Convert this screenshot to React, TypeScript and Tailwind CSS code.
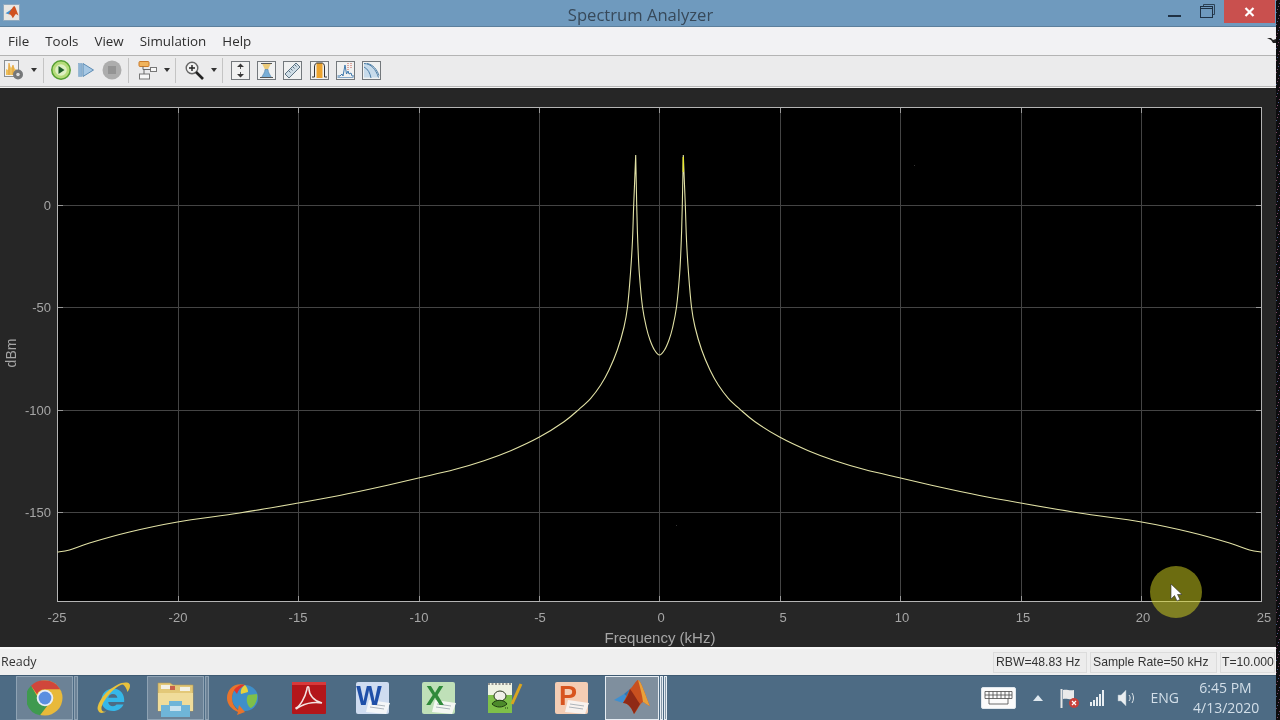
import type { ReactNode } from 'react';

// ---------------------------------------------------------------------------
// Chart data (page pixels, traced from 0 kHz outwards and back for the inner slope)
// ---------------------------------------------------------------------------

const CENTER_X = 659.5;
const HALF_TRACE: [number, number][] = [
  [0, 355], [5, 350], [9.5, 340], [13, 328], [17, 307], [20.2, 273], [21.8, 240], [22.8, 205], [23.8, 155],
  [25.8, 205], [27, 240], [29, 273], [32, 307], [35.5, 327], [42.2, 350], [50.5, 370], [58.8, 385],
  [68.8, 398.3], [80.5, 409.3], [95.5, 421.7], [120.5, 437.3], [148.8, 450.7], [175.5, 460.7], [205, 469.5],
  [241, 478], [280, 487], [320, 495.5], [361, 503], [420, 513], [482, 522], [530, 532], [570, 543], [590, 550], [602, 552],
];

function tracePath(): string {
  const left = [...HALF_TRACE].reverse().map(([dx, y]) => [CENTER_X - dx, y]);
  const right = HALF_TRACE.slice(1).map(([dx, y]) => [CENTER_X + dx, y]);
  const pts = [...left, ...right];
  let d = `M${pts[0][0]} ${pts[0][1]}`;
  for (let i = 0; i < pts.length - 1; i++) {
    const p0 = pts[Math.max(0, i - 1)];
    const p1 = pts[i];
    const p2 = pts[i + 1];
    const p3 = pts[Math.min(pts.length - 1, i + 2)];
    // keep the peaks sharp
    const k = p1[1] < 160 || p2[1] < 160 ? 0 : 1 / 6;
    d += `C${p1[0] + (p2[0] - p0[0]) * k} ${p1[1] + (p2[1] - p0[1]) * k} ${p2[0] - (p3[0] - p1[0]) * k} ${p2[1] - (p3[1] - p1[1]) * k} ${p2[0]} ${p2[1]}`;
  }
  return d;
}

const X_TICKS = [
  { x: 57.5, lx: 57, t: '-25' }, { x: 178.5, lx: 178, t: '-20' }, { x: 298.5, lx: 298, t: '-15' },
  { x: 419.5, lx: 419, t: '-10' }, { x: 539.5, lx: 540, t: '-5' }, { x: 659.5, lx: 661, t: '0' },
  { x: 780.5, lx: 783, t: '5' }, { x: 900.5, lx: 902, t: '10' }, { x: 1021.5, lx: 1023, t: '15' },
  { x: 1141.5, lx: 1143, t: '20' }, { x: 1261.5, lx: 1264, t: '25' },
];
const Y_TICKS = [
  { y: 205.5, t: '0' }, { y: 307.5, t: '-50' }, { y: 410.5, t: '-100' }, { y: 512.5, t: '-150' },
];

function Chart() {
  return (
    <svg viewBox="0 88 1276 559" className="block h-full w-full" style={{ fontFamily: '"Liberation Sans", sans-serif' }}>
      <rect x="57.5" y="107.5" width="1204" height="494" fill="#000" />
      {X_TICKS.slice(1, -1).map((k) => (
        <g key={k.t}>
          <line x1={k.x} x2={k.x} y1="107.5" y2="601.5" stroke="#444" />
          <line x1={k.x} x2={k.x} y1="107.5" y2="113" stroke="#999" />
          <line x1={k.x} x2={k.x} y1="596" y2="601.5" stroke="#999" />
        </g>
      ))}
      {Y_TICKS.map((k) => (
        <g key={k.t}>
          <line x1="57.5" x2="1261.5" y1={k.y} y2={k.y} stroke="#444" />
          <line x1="57.5" x2="63" y1={k.y} y2={k.y} stroke="#999" />
          <line x1="1256" x2="1261.5" y1={k.y} y2={k.y} stroke="#999" />
        </g>
      ))}
      <rect x="57.5" y="107.5" width="1204" height="494" fill="none" stroke="#b4b4b4" />
      <path d={tracePath()} fill="none" stroke="#e2e2a6" strokeWidth="1.1" />
      <line x1="683.3" x2="683.3" y1="157" y2="172" stroke="#e8e830" strokeWidth="1.4" />
      <rect x="914" y="165" width="1" height="1" fill="#333" />
      <rect x="676" y="525" width="1" height="1" fill="#333" />
      {X_TICKS.map((k) => (
        <text key={k.t} x={k.lx} y="622" textAnchor="middle" fontSize="13" fill="#a6a6a6">{k.t}</text>
      ))}
      {Y_TICKS.map((k) => (
        <text key={k.t} x="51" y={k.y + 4} textAnchor="end" fontSize="13" fill="#a6a6a6">{k.t}</text>
      ))}
      <text x="660" y="643" textAnchor="middle" fontSize="15" fill="#a6a6a6">Frequency (kHz)</text>
      <text transform="translate(16 353) rotate(-90)" textAnchor="middle" fontSize="14" fill="#a6a6a6">dBm</text>
    </svg>
  );
}

// ---------------------------------------------------------------------------
// Toolbar icons
// ---------------------------------------------------------------------------

function Caret() {
  return <svg width="6" height="4" viewBox="0 0 6 4"><path d="M0 0h6L3 4z" fill="#333" /></svg>;
}

function Sep() {
  return <div className="h-[25px] w-px bg-[#c4c4c4]" />;
}

function Tool({ children }: { children: ReactNode }) {
  return (
    <svg width="19" height="19" viewBox="0 0 19 19" className="shrink-0">
      <rect x="0.5" y="0.5" width="18" height="18" fill="#f0f1f1" stroke="#73787c" />
      {children}
    </svg>
  );
}

function Toolbar() {
  return (
    <div className="flex h-[31px] items-center border-b border-[#b9b9b9] bg-[#ebebec] pb-[2px] pl-[4px]">
      <svg width="20" height="20" viewBox="0 0 20 20">
        <rect x="0.5" y="0.5" width="14" height="16" fill="#f2f2f2" stroke="#8a8f93" />
        <path d="M2 15V9l2 1 1-7 2 5 2-3 2 4 2 1v5z" fill="#ecc05e" />
        <path d="M5 3v12M9 5v10" stroke="#e39c35" />
        <circle cx="14" cy="14.500" r="5" fill="#77797b" />
        <circle cx="14" cy="14.500" r="2.200" fill="#ddd" stroke="#555" strokeWidth="0.6" />
      </svg>
      <div className="ml-[7px]"><Caret /></div>
      <div className="ml-[6px]"><Sep /></div>
      <svg width="20" height="20" viewBox="0 0 20 20" className="ml-[7px]">
        <circle cx="10" cy="10" r="9.200" fill="#b6dc7a" stroke="#559f32" strokeWidth="1.500" />
        <circle cx="10" cy="10" r="5.800" fill="#dff0c4" />
        <path d="M7.500 6l6 4-6 4z" fill="#1f5f2a" />
      </svg>
      <svg width="16" height="16" viewBox="0 0 16 16" className="ml-[7px]">
        <rect x="0.500" y="1.500" width="3.500" height="13" fill="#8fb4d4" stroke="#7aa3c6" strokeWidth="0.5" />
        <path d="M5 1.500L15.500 8 5 14.500z" fill="#a7c8e4" stroke="#5d8cb4" />
      </svg>
      <svg width="20" height="20" viewBox="0 0 20 20" className="ml-[8px]">
        <circle cx="10" cy="10" r="9.500" fill="#adadad" />
        <rect x="6" y="6" width="8" height="8" fill="#949494" />
      </svg>
      <div className="ml-[6px]"><Sep /></div>
      <svg width="19" height="20" viewBox="0 0 19 20" className="ml-[9px]">
        <rect x="1" y="1.500" width="10" height="5" rx="1" fill="#f0b35c" stroke="#c97a2a" />
        <rect x="1.500" y="14" width="10" height="5" fill="#f7f7f7" stroke="#777" />
        <rect x="12.500" y="7.500" width="6" height="4" fill="#f7f7f7" stroke="#777" />
        <path d="M5 6.500v3h7.500M6 14v-4" fill="none" stroke="#666" />
      </svg>
      <div className="ml-[7px]"><Caret /></div>
      <div className="ml-[5px]"><Sep /></div>
      <svg width="19" height="19" viewBox="0 0 19 19" className="ml-[9px]">
        <circle cx="7" cy="7" r="5.800" fill="#f2f2f2" stroke="#666" strokeWidth="1.400" />
        <path d="M4 7h6M7 4v6" stroke="#222" strokeWidth="1.400" />
        <path d="M11 11l7 7" stroke="#222" strokeWidth="2.600" />
      </svg>
      <div className="ml-[7px]"><Caret /></div>
      <div className="ml-[5px]"><Sep /></div>
      <div className="ml-[8px] flex gap-[7.2px]">
        <Tool>
          <path d="M9.500 2.500l3.500 3.500H6zM9.500 16.500L13 13H6z" fill="#383838" />
          <path d="M9.500 6v2M9.500 11v2" stroke="#555" />
        </Tool>
        <Tool>
          <path d="M5 2.500h9l-3 6H8z" fill="#eccb7a" />
          <path d="M8 8.500h3c0 3 2 5 3.500 8h-10c1.500-3 3.500-5 3.500-8z" fill="#79aed6" stroke="#4d7fa8" strokeWidth="0.600" />
          <path d="M4 2.500h11M3 16.500h13" stroke="#555" />
        </Tool>
        <Tool>
          <path d="M2 13L13 2l4 4L6 17z" fill="#cfdde6" stroke="#5b7282" />
          <path d="M6 10l1.500 1.500M8 8l1.500 1.500M10 6l1.500 1.500M12 4l1.500 1.500" stroke="#5b7282" />
        </Tool>
        <Tool>
          <rect x="6.500" y="2" width="6" height="15" fill="#eda42e" />
          <path d="M2 16h2.500V6c0-3 1.500-4 2.500-4h5c1 0 2.500 1 2.500 4v10H17" fill="none" stroke="#333" />
        </Tool>
        <Tool>
          <path d="M1.500 15h2.500l2-2 1 2 2-11 1.500 9 1.500-3 1 3 2-1 1 3h2" fill="none" stroke="#3f79ad" />
          <path d="M1.500 16.500h16" stroke="#3f79ad" strokeWidth="0.6" />
          <path d="M12 2v7M15 2v5" stroke="#c85a4a" strokeDasharray="1 1" />
        </Tool>
        <Tool>
          <path d="M2 2.500c7 0 12 6 14.500 14H2z" fill="#b5d2e8" opacity="0.7" />
          <path d="M2 2.500c7 0 12 6 14.500 14M5 2.500c6 1 10 6 12 12M9 17c-1-5-3-9-7-11" fill="none" stroke="#4d7fa8" />
        </Tool>
      </div>
    </div>
  );
}

// ---------------------------------------------------------------------------
// Taskbar icons
// ---------------------------------------------------------------------------

function ChromeIcon() {
  return (
    <svg width="36" height="36" viewBox="0 0 36 36">
      <circle cx="18" cy="18" r="17.500" fill="#e8b93a" />
      <path d="M18 .5a17.500 17.500 0 0 1 15.200 8.750H18a8.750 8.750 0 0 0-8 5L4 5.800A17.500 17.500 0 0 1 18 .5z" fill="#d0463b" />
      <path d="M4 5.800l7.800 13.200a8 8 0 0 0 8.500 6.700L13 35.300A17.500 17.500 0 0 1 4 5.800z" fill="#3f9a4f" />
      <circle cx="18" cy="18" r="8.300" fill="#e9eef5" />
      <circle cx="18" cy="18" r="6.400" fill="#5b8fe0" />
    </svg>
  );
}

function IeIcon() {
  return (
    <svg width="36" height="36" viewBox="0 0 36 36">
      <path d="M18 8.500a11.500 11.500 0 0 0-11.500 12c0 6.500 5 10.500 11.500 10.500 5 0 8.500-2.500 10.500-6.500h-7c-1 1.200-2 1.700-3.500 1.700-2.800 0-4.500-1.700-4.800-4.200h16c.7-8-4-13.500-11.200-13.500zm-4.700 9.300c.4-2.400 2.100-3.900 4.600-3.900s4.200 1.500 4.500 3.900z" fill="#35b7e8" />
      <path d="M3 30C1 26 8 12 22 5c6-3 11-3 12.500-1 1.300 2 0 5-2 8-1-3.500-2.500-6-4.500-7.500C20 5.500 6 22 6.500 29c0 2 2 3 4.500 2.500C7 34 4 33 3 30z" fill="#e8c23c" />
    </svg>
  );
}

function FolderIcon() {
  return (
    <svg width="37" height="37" viewBox="0 0 37 37">
      <path d="M1 3h12l3 2h20v26H1z" fill="#e3c878" stroke="#b99c50" strokeWidth="0.600" />
      <rect x="4" y="5" width="9" height="4" fill="#f4f1e4" />
      <rect x="23" y="7" width="10" height="4" fill="#f4f1e4" />
      <rect x="13" y="6" width="5" height="4" fill="#c9614a" />
      <path d="M1 13h35v18H1z" fill="#f0dc9a" />
      <path d="M4 37V25h8v-4h13v4h8v12z" fill="#6fb5d8" />
      <rect x="13" y="26" width="11" height="5" fill="#c9e2ee" />
    </svg>
  );
}

function SyncIcon() {
  return (
    <svg width="34" height="34" viewBox="0 0 34 34">
      <circle cx="19" cy="17" r="13" fill="#3f8fc9" />
      <path d="M19 4c-8 0-13 6-13 13 0 5 2 9 6 12l1-5 6 7-8 3 1-3C5 28 1 23 1 17 1 8 9 1 19 4z" fill="#e8742c" />
      <path d="M8 9c3-4 7-6 11-5-4 2-7 5-8 9z" fill="#e2342c" />
      <path d="M19 4c2 2 3 4 3 7l-7 2c-1-4 1-7 4-9z" fill="#e8d23c" />
      <path d="M22 14l9-1c1 6-2 12-6 14-3-1-6-8-3-13z" fill="#7fc04a" />
    </svg>
  );
}

function AcrobatIcon() {
  return (
    <svg width="36" height="34" viewBox="0 0 36 34">
      <rect x="1" y="1" width="34" height="32" rx="1" fill="#b3161a" />
      <rect x="1" y="1" width="34" height="3" fill="#d8393a" />
      <path d="M5 27c4-2 9-10 11-19 0-3 2-3 2 0 0 6 5 12 13 14-7-1-15 0-21 3-3 1-5 4-5 2z" fill="none" stroke="#f4e4e2" strokeWidth="1.500" />
    </svg>
  );
}

function OfficeIcon({ letter, tile, mark, sheet }: { letter: string; tile: string; mark: string; sheet: string }) {
  return (
    <svg width="36" height="34" viewBox="0 0 36 34" style={{ fontFamily: '"Liberation Sans", sans-serif' }}>
      <rect x="1" y="1" width="33" height="32" rx="2" fill={tile} />
      <path d="M14 19l21 3-4 11-20-2z" fill={sheet} />
      <path d="M16 23l14 2M15 26l14 2" stroke="#9aa4ad" strokeWidth="0.800" />
      <text x="14" y="24" textAnchor="middle" fontSize="27" fontWeight="700" fill={mark}>{letter}</text>
    </svg>
  );
}

function NotepadIcon() {
  return (
    <svg width="36" height="34" viewBox="0 0 36 34">
      <path d="M1 2h24v30H1z" fill="#eef2e2" />
      <path d="M1 14h24v18H1z" fill="#7fc04a" />
      <path d="M1 3h24" stroke="#777" strokeWidth="1.500" strokeDasharray="2 1.500" />
      <ellipse cx="13" cy="15" rx="6" ry="5" fill="#f0f0e8" stroke="#2c3a20" />
      <path d="M5 23c3-5 12-5 15 0-4 4-11 4-15 0z" fill="#4c8a2a" stroke="#1f3a12" />
      <path d="M25 23L34 3" stroke="#d9a520" strokeWidth="3" />
      <path d="M18 27h4" stroke="#1f3a12" strokeDasharray="1 1" />
    </svg>
  );
}

function MatlabIcon() {
  return (
    <svg width="38" height="36" viewBox="0 0 38 36">
      <path d="M1 20l10-6 5 4-6 5z" fill="#3f8fd0" />
      <path d="M11 14l6-5 2 4-3 5z" fill="#2f78b8" />
      <path d="M17 9C20 7 23 0 25 0c3 0 8 17 12 26-3-1-6-4-7-4-3 1-6 9-9 12-2-5-5-11-11-11z" fill="#c9501f" />
      <path d="M25 0c3 0 8 17 12 26-3-1-6-4-7-4-1-8-3-15-5-22z" fill="#e8a03a" />
      <path d="M10 23c6 0 9 6 11 11 2-3 4-7 6-10-3-4-6-10-10-15-1 4-3 9-7 14z" fill="#8f2a16" />
    </svg>
  );
}

function TaskButton({ active, strips = 1, children }: { active?: boolean; strips?: number; children: ReactNode }) {
  return (
    <div className="flex h-[44px] shrink-0 items-stretch gap-px">
      <div className={`flex items-center justify-center border ${active ? 'w-[54px] border-[#e6edf3] bg-[#7f8f9e]' : 'w-[57px] border-[#8fa3b4] bg-[#6c8296]'}`}>
        {children}
      </div>
      {Array.from({ length: strips }).map((_, i) => (
        <div key={i} className={`border ${active ? 'w-[3px] border-[#e6edf3] bg-[#8698a8]' : 'w-[4px] border-[#8fa3b4] bg-[#6c8296]'}`} />
      ))}
    </div>
  );
}

function Slot({ width, children }: { width: string; children: ReactNode }) {
  return <div className={`flex h-[44px] shrink-0 items-center justify-center ${width}`}>{children}</div>;
}

function Tray() {
  return (
    <div className="ml-auto flex h-full items-center text-[#d3dfe9]">
      <svg width="35" height="22" viewBox="0 0 35 22">
        <rect x="0.500" y="0.500" width="34" height="21" rx="1.500" fill="#fbfbfb" stroke="#dfe6ec" />
        <path d="M4 4.500h27v7H4zM4 8h27M8 4.500v7M12 4.500v7M16 4.500v7M20 4.500v7M24 4.500v7M28 4.500v7M8 11.500V17h19v-5.500" fill="none" stroke="#4a4a4a" strokeWidth="0.800" />
      </svg>
      <svg width="10" height="6" viewBox="0 0 10 6" className="ml-[17px]"><path d="M5 0l5 6H0z" fill="#dfe8ef" /></svg>
      <svg width="20" height="21" viewBox="0 0 20 21" className="ml-[17px]">
        <path d="M1.500 1v19" stroke="#e6e6e6" strokeWidth="2" />
        <path d="M3 2c4-1 6 1 11 0v9c-5 1-7-1-11 0z" fill="#eaeaea" />
        <circle cx="14" cy="15" r="5" fill="#c8403a" />
        <path d="M12 13l4 4M16 13l-4 4" stroke="#fff" strokeWidth="1.200" />
      </svg>
      <svg width="15" height="16" viewBox="0 0 15 16" className="ml-[9px]">
        <path d="M1 12h2v4H1zM4 10h2v6H4zM7 7h2v9H7zM10 4h2v12h-2zM13 0h2v16h-2z" fill="#e8edf1" />
      </svg>
      <svg width="19" height="18" viewBox="0 0 19 18" className="ml-[13px]">
        <path d="M1 6h3l5-5v16l-5-5H1z" fill="#eaeef1" stroke="#9fb0bd" strokeWidth="0.500" />
        <path d="M12 6c1.500 2 1.500 4 0 6M15 4c2 3 2 7 0 10" fill="none" stroke="#dde5ea" />
      </svg>
      <span className="ml-[15px] text-[14px] leading-none">ENG</span>
      <div className="ml-[14px] w-[65px] text-center text-[14px] leading-[20px]">
        <div>6:45 PM</div>
        <div className="whitespace-nowrap">4/13/2020</div>
      </div>
      <div className="w-[18px]" />
    </div>
  );
}

// ---------------------------------------------------------------------------
// Right edge video noise
// ---------------------------------------------------------------------------

const NOISE_COLORS = ['#7a4a6a', '#3f7a5a', '#4a5a8a', '#8a7a3a', '#999', '#555'];

function Noise() {
  const dots = [];
  for (let i = 0; i < 240; i++) {
    const y = (i * 3) % 720;
    const x = (i * 7) % 4;
    dots.push(<rect key={i} x={x} y={y} width="1" height="1" fill={NOISE_COLORS[(i * i + i) % 6]} />);
  }
  return (
    <svg width="4" height="720" viewBox="0 0 4 720" className="block shrink-0">
      <rect width="4" height="720" fill="#0d0d0f" />
      {dots}
    </svg>
  );
}

// ---------------------------------------------------------------------------
// Page
// ---------------------------------------------------------------------------

export default function App() {
  return (
    <div className="relative flex h-[720px] w-[1280px] overflow-hidden bg-black blur-[0.3px]" style={{ fontFamily: '"Open Sans", "Noto Sans", sans-serif' }}>
      <div className="flex w-[1276px] shrink-0 flex-col">
        {/* Title bar */}
        <div className="grid h-[27px] shrink-0 grid-cols-[1fr_auto_1fr] items-start border-b border-[#5c7f9c] bg-[#6f9abe] pr-[1px]">
          <div className="mt-[4px] ml-[3px] flex h-[17px] w-[17px] items-center justify-center border border-[#8fa9bf] bg-[#e8e6e2]">
            <svg width="14" height="13" viewBox="0 0 38 36">
              <path d="M1 20l10-6 6-5 3 9-10 5z" fill="#3f8fd0" />
              <path d="M17 9C20 7 23 0 25 0c3 0 8 17 12 26-3-1-6-4-7-4-3 1-6 9-9 12-2-5-5-11-11-11z" fill="#d0521f" />
            </svg>
          </div>
          <div className="mt-[3px] ml-[6px] text-[16.6px] leading-[24px] text-[#37495a]">Spectrum Analyzer</div>
          <div className="flex items-start justify-self-end">
            <div className="mt-[15px] h-[2px] w-[13px] bg-[#1f3144]" />
            <svg width="15" height="14" viewBox="0 0 15 14" className="mt-[4px] ml-[19px]">
              <path d="M3.500 2.500V.5h11v10h-2" fill="none" stroke="#2c4256" />
              <rect x="0.500" y="2.500" width="12" height="11" fill="none" stroke="#1f3144" />
              <path d="M1 4.500h11" stroke="#1f3144" />
            </svg>
            <div className="ml-[9px] flex h-[23px] w-[51px] items-center justify-center bg-[#c9504e]">
              <svg width="11" height="10" viewBox="0 0 11 10"><path d="M1.500 1l8 8M9.500 1l-8 8" stroke="#fff" strokeWidth="2.200" /></svg>
            </div>
          </div>
        </div>

        {/* Menu bar */}
        <div className="relative flex h-[29px] shrink-0 items-center gap-4 border-b border-[#b4b4b4] bg-[#f2f2f4] pt-[1px] pl-[8px] text-[13.4px] text-[#2e2e2e]">
          <span>File</span>
          <span>Tools</span>
          <span>View</span>
          <span>Simulation</span>
          <span>Help</span>
          <svg width="9" height="8" viewBox="0 0 9 8" className="absolute top-[10px] right-0">
            <path d="M0 1h4l2 2 3-1v4H6L4 3z" fill="#222" />
          </svg>
        </div>

        <Toolbar />
        <div className="h-px shrink-0 bg-[#f4f4f4]" />

        {/* Plot */}
        <div className="min-h-0 flex-1 bg-[#262626]">
          <Chart />
        </div>

        {/* Status bar */}
        <div className="flex h-[28px] shrink-0 items-center border-t-2 border-[#f7f7f7] bg-[#efefef] pr-[1px] pl-px text-[12.2px] text-[#333]" style={{ fontFamily: '"Liberation Sans", sans-serif' }}>
          <span className="text-[12.5px]" style={{ fontFamily: '"Open Sans", sans-serif' }}>Ready</span>
          <div className="ml-auto flex gap-[3px]">
            <div className="flex h-[21px] w-[94px] items-center border border-[#dcdcdc] bg-[#ececec] pl-[2px] whitespace-nowrap">RBW=48.83 Hz</div>
            <div className="flex h-[21px] w-[127px] items-center border border-[#dcdcdc] bg-[#ececec] pl-[2px] whitespace-nowrap">Sample Rate=50 kHz</div>
            <div className="flex h-[21px] w-[55px] items-center border border-[#dcdcdc] bg-[#ececec] pl-px whitespace-nowrap">T=10.000</div>
          </div>
        </div>

        {/* Taskbar */}
        <div className="flex h-[45px] shrink-0 items-end border-t border-[#3e5a72] bg-[#4d6b84] pl-[16px]">
          <TaskButton><ChromeIcon /></TaskButton>
          <Slot width="w-[69px]"><IeIcon /></Slot>
          <TaskButton><FolderIcon /></TaskButton>
          <Slot width="w-[68px]"><SyncIcon /></Slot>
          <Slot width="w-[63px]"><AcrobatIcon /></Slot>
          <Slot width="w-[66px]"><OfficeIcon letter="W" tile="#cfdcf0" mark="#1f4fa8" sheet="#f4f6f8" /></Slot>
          <Slot width="w-[66px]"><OfficeIcon letter="X" tile="#bfe0b8" mark="#2f8a3a" sheet="#f4f8f2" /></Slot>
          <Slot width="w-[66px]"><NotepadIcon /></Slot>
          <Slot width="w-[67px]"><OfficeIcon letter="P" tile="#f4cdb4" mark="#d8541e" sheet="#f8f2ee" /></Slot>
          <TaskButton active strips={2}><MatlabIcon /></TaskButton>
          <Tray />
        </div>
      </div>
      <Noise />

      {/* Mouse highlight over the plot */}
      <div className="absolute top-[566px] left-[1150px] h-[52px] w-[52px] rounded-full bg-[#d8d820] opacity-50" />
      <svg width="13" height="20" viewBox="0 0 13 20" className="absolute top-[583px] left-[1170px]">
        <path d="M1 1v15l3.500-3.500L7 18l3-1.500-2.500-5H12z" fill="#fff" stroke="#333" strokeWidth="0.600" />
      </svg>
    </div>
  );
}
